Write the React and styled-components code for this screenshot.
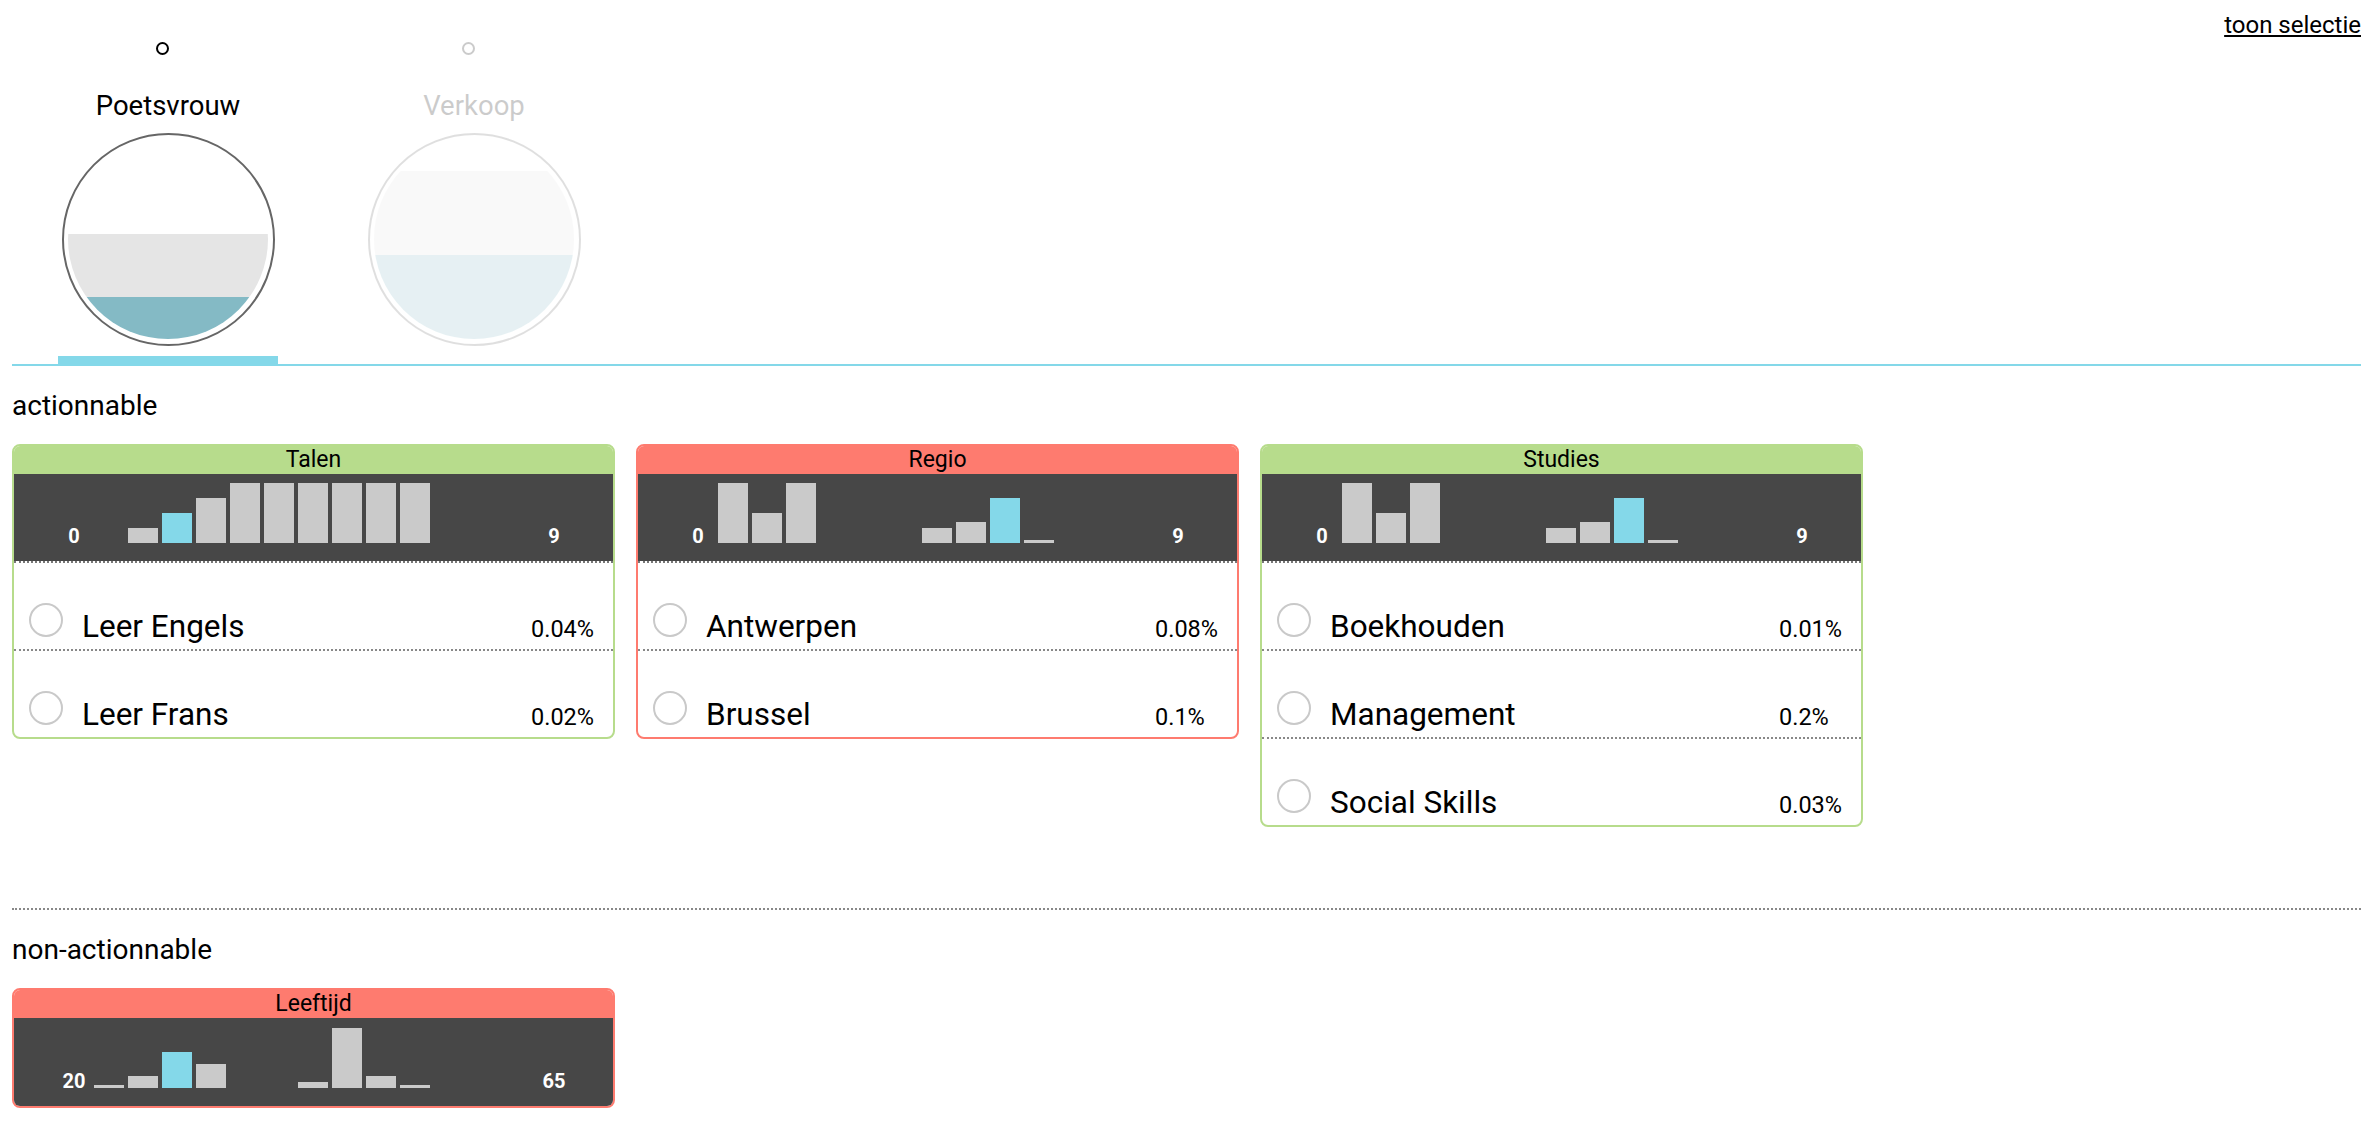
import React from "react";
import styled, { createGlobalStyle } from "styled-components";

const GREEN = "#b7dc8c";
const RED = "#fe7b6f";
const CYAN = "#84d8e9";

const GlobalStyle = createGlobalStyle`
  body {
    margin: 0;
    background: #fff;
    color: #000;
    font-family: Roboto, "Liberation Sans", sans-serif;
  }
`;

const Page = styled.div`
  padding: 0 9px 0 12px;
`;

const TopBar = styled.div`
  display: flex;
  justify-content: space-between;
  align-items: flex-start;
  border-bottom: 2px solid ${CYAN};
`;

const TabStrip = styled.div`
  display: flex;
  padding-left: 3px;
`;

const Tab = styled.div`
  width: 306px;
  display: flex;
  flex-direction: column;
  align-items: center;
  padding-top: 42px;
  cursor: pointer;
`;

const TabBody = styled.div`
  display: flex;
  flex-direction: column;
  align-items: center;
  opacity: ${({ $active }) => ($active ? 1 : 0.2)};
`;

const Dot = styled.div`
  width: 9px;
  height: 9px;
  border: 2.5px solid #000;
  border-radius: 50%;
  margin-right: 11px;
`;

const TabLabel = styled.div`
  margin-top: 34.5px;
  font-size: 27.5px;
  line-height: 32px;
`;

const Bowl = styled.div`
  margin-top: 11px;
  width: 213px;
  height: 213px;
  box-sizing: border-box;
  border: 2px solid #666;
  border-radius: 50%;
  padding: 4.5px;
`;

const BowlInner = styled.div`
  width: 100%;
  height: 100%;
  border-radius: 50%;
  overflow: hidden;
  display: flex;
  flex-direction: column;
  justify-content: flex-end;
`;

const Band = styled.div`
  background: ${({ $color }) => $color};
`;

const Indicator = styled.div`
  margin-top: 10px;
  width: 220px;
  height: 8px;
  background: ${({ $active }) => ($active ? CYAN : "transparent")};
`;

const ShowLink = styled.a`
  margin-top: 11px;
  font-size: 24px;
  line-height: 28px;
  color: #000;
  text-decoration: underline;
  cursor: pointer;
`;

const SectionTitle = styled.div`
  margin: 24px 0 22px;
  font-size: 28px;
  line-height: 32px;
`;

const CardRow = styled.div`
  display: flex;
  gap: 21px;
  align-items: flex-start;
`;

const Separator = styled.div`
  margin-top: 81px;
  border-top: 2px dotted #888;
`;

const Card = styled.div`
  width: 603px;
  box-sizing: border-box;
  border: 2px solid ${({ $color }) => $color};
  border-radius: 8px;
  overflow: hidden;
  background: #fff;
`;

const CardHeader = styled.div`
  height: 28px;
  line-height: 28px;
  text-align: center;
  font-size: 23px;
  background: ${({ $color }) => $color};
`;

const Chart = styled.div`
  box-sizing: border-box;
  height: ${({ $divided }) => ($divided ? 89 : 88)}px;
  display: flex;
  align-items: flex-end;
  padding: 0 0 18px 40px;
  background: #474747;
  background-clip: padding-box;
  border-bottom: ${({ $divided }) => ($divided ? "2px dotted #777" : "none")};
`;

const AxisLabel = styled.div`
  width: 40px;
  margin-left: ${({ $end }) => ($end ? "104px" : "0")};
  margin-bottom: -3px;
  text-align: center;
  color: #fff;
  font-weight: 700;
  font-size: 20px;
  line-height: 1;
`;

const Bars = styled.div`
  display: flex;
  align-items: flex-end;
  gap: 4px;
  height: 60px;
`;

const Bar = styled.div`
  width: 30px;
  background: ${({ $hl }) => ($hl ? CYAN : "#cacaca")};
`;

const Option = styled.div`
  display: flex;
  align-items: baseline;
  height: 46px;
  padding: 40px 0 0 15px;
  border-bottom: 2px dotted #888;

  &:last-child {
    border-bottom: none;
  }
`;

const Radio = styled.div`
  width: 30px;
  height: 30px;
  border: 2px solid #c9c9c9;
  border-radius: 50%;
`;

const OptionName = styled.div`
  flex: 1;
  margin-left: 19px;
  font-size: 31.5px;
  line-height: 34px;
`;

const Percent = styled.div`
  width: 82px;
  font-size: 23.5px;
  line-height: 28px;
`;

const tabs = [
  { name: "Poetsvrouw", active: true, filled: 52.5, matched: 21 },
  { name: "Verkoop", active: false, filled: 84, matched: 42 },
];

const actionnable = [
  {
    title: "Talen",
    color: GREEN,
    range: [0, 9],
    bars: [0, 15, 30, 45, 60, 60, 60, 60, 60, 60],
    hl: 2,
    options: [
      ["Leer Engels", "0.04%"],
      ["Leer Frans", "0.02%"],
    ],
  },
  {
    title: "Regio",
    color: RED,
    range: [0, 9],
    bars: [60, 30, 60, 0, 0, 0, 15, 21, 45, 3],
    hl: 8,
    options: [
      ["Antwerpen", "0.08%"],
      ["Brussel", "0.1%"],
    ],
  },
  {
    title: "Studies",
    color: GREEN,
    range: [0, 9],
    bars: [60, 30, 60, 0, 0, 0, 15, 21, 45, 3],
    hl: 8,
    options: [
      ["Boekhouden", "0.01%"],
      ["Management", "0.2%"],
      ["Social Skills", "0.03%"],
    ],
  },
];

const nonActionnable = [
  {
    title: "Leeftijd",
    color: RED,
    range: [20, 65],
    bars: [3, 12, 36, 24, 0, 0, 6, 60, 12, 3],
    hl: 2,
    options: [],
  },
];

const Criterion = ({ item }) => (
  <Card $color={item.color}>
    <CardHeader $color={item.color}>{item.title}</CardHeader>
    <Chart $divided={item.options.length > 0}>
      <AxisLabel>{item.range[0]}</AxisLabel>
      <Bars>
        {item.bars.map((h, i) => (
          <Bar key={i} $hl={i === item.hl} style={{ height: h }} />
        ))}
      </Bars>
      <AxisLabel $end>{item.range[1]}</AxisLabel>
    </Chart>
    {item.options.map(([name, pct]) => (
      <Option key={name}>
        <Radio />
        <OptionName>{name}</OptionName>
        <Percent>{pct}</Percent>
      </Option>
    ))}
  </Card>
);

const App = () => {
  return (
    <Page>
      <GlobalStyle />
      <TopBar>
        <TabStrip>
          {tabs.map((tab) => (
            <Tab key={tab.name}>
              <TabBody $active={tab.active}>
                <Dot />
                <TabLabel>{tab.name}</TabLabel>
                <Bowl>
                  <BowlInner>
                    <Band
                      $color="#e5e5e5"
                      style={{ height: `${tab.filled - tab.matched}%` }}
                    />
                    <Band $color="#84bac5" style={{ height: `${tab.matched}%` }} />
                  </BowlInner>
                </Bowl>
              </TabBody>
              <Indicator $active={tab.active} />
            </Tab>
          ))}
        </TabStrip>
        <ShowLink>toon selectie</ShowLink>
      </TopBar>

      <SectionTitle>actionnable</SectionTitle>
      <CardRow>
        {actionnable.map((item) => (
          <Criterion key={item.title} item={item} />
        ))}
      </CardRow>

      <Separator />

      <SectionTitle>non-actionnable</SectionTitle>
      <CardRow>
        {nonActionnable.map((item) => (
          <Criterion key={item.title} item={item} />
        ))}
      </CardRow>
    </Page>
  );
};

export default App;
